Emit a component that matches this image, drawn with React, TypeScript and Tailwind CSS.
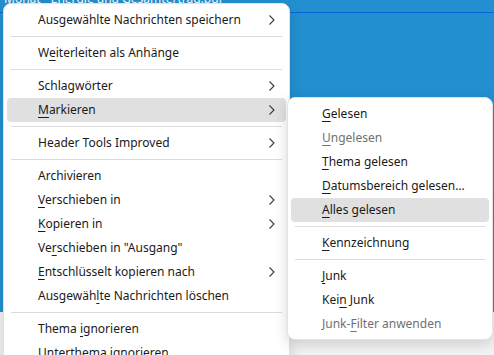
// Kontextmenü einer Nachrichtenliste (Thunderbird, Windows 11 Stil)
// Hauptmenü links, Untermenü "Markieren" rechts daneben.

type Entry =
  | { label: string; sub?: boolean; disabled?: boolean; active?: boolean }
  | "sep";

// "&" markiert die Zugriffstaste (wird unterstrichen)
const MAIN_MENU: Entry[] = [
  { label: "Ausgewählte Nachrichten speichern", sub: true },
  "sep",
  { label: "W&eiterleiten als Anhänge" },
  "sep",
  { label: "Schlagwörter", sub: true },
  { label: "&Markieren", sub: true, active: true },
  "sep",
  { label: "Header Tools Improved", sub: true },
  "sep",
  { label: "Archivieren" },
  { label: "&Verschieben in", sub: true },
  { label: "&Kopieren in", sub: true },
  { label: 'Ve&rschieben in "Ausgang"' },
  { label: "&Entschlüsselt kopieren nach", sub: true },
  { label: "Ausgewäh&lte Nachrichten löschen" },
  "sep",
  { label: "Thema &ignorieren" },
  { label: "Unterthema &ignorieren" },
];

const MARK_MENU: Entry[] = [
  { label: "&Gelesen" },
  { label: "&Ungelesen", disabled: true },
  { label: "&Thema gelesen" },
  { label: "&Datumsbereich gelesen…" },
  { label: "&Alles gelesen", active: true },
  "sep",
  { label: "&Kennzeichnung" },
  "sep",
  { label: "&Junk" },
  { label: "Kei&n Junk" },
  { label: "Junk-&Filter anwenden", disabled: true },
];

function Label({ text }: { text: string }) {
  const i = text.indexOf("&");
  if (i < 0) return <>{text}</>;
  return (
    <>
      {text.slice(0, i)}
      <span className="underline decoration-1 underline-offset-[3px]">
        {text.charAt(i + 1)}
      </span>
      {text.slice(i + 2)}
    </>
  );
}

function Chevron() {
  return (
    <svg width="8" height="12" viewBox="0 0 8 12" className="shrink-0">
      <path
        d="M1.5 1.5 L6 6 L1.5 10.5"
        fill="none"
        stroke="#3a3a3a"
        strokeWidth="1.1"
      />
    </svg>
  );
}

function MenuList({ items }: { items: Entry[] }) {
  return (
    <ul className="flex flex-col">
      {items.map((item, idx) =>
        item === "sep" ? (
          <li key={idx} className="px-1 py-1">
            <div className="h-px bg-[#dcdcdc]" />
          </li>
        ) : (
          <li
            key={idx}
            className={`flex h-6 items-center justify-between rounded pl-[31px] pr-[10px] ${
              item.active ? "bg-[#e0e0e0]" : ""
            } ${item.disabled ? "text-[#707070]" : "text-[#1a1a1a]"}`}
          >
            <span className="whitespace-nowrap leading-none">
              <Label text={item.label} />
            </span>
            {item.sub ? <Chevron /> : null}
          </li>
        ),
      )}
    </ul>
  );
}

export default function App() {
  return (
    <div className="relative flex h-[355px] w-[494px] flex-col overflow-hidden bg-[#f3f3f3] font-['Noto_Sans',sans-serif] text-[12px]">
      {/* markierte Nachrichten im Hintergrund */}
      <div className="flex h-[312px] flex-col bg-[#2290d0]">
        <div className="flex h-3 items-end overflow-hidden pl-1 text-white">
          <span className="whitespace-nowrap leading-[14px] -translate-y-[6px]">
            Monat - Energie und Gesamtertrag.pdf
          </span>
        </div>
        <div className="h-px bg-[#0a64dc]" />
      </div>

      <div className="absolute left-[3px] top-[3px] w-[287px] rounded-lg border border-[#e2e2e2] bg-white px-[3px] pb-[4px] pt-[4px] shadow-[0_4px_14px_rgba(0,0,0,0.14)]">
        <MenuList items={MAIN_MENU} />
      </div>

      <div className="absolute left-[287px] top-[97px] w-[206px] rounded-lg border border-[#e2e2e2] bg-white px-[3px] pb-[3px] pt-[4px] shadow-[0_4px_14px_rgba(0,0,0,0.16)]">
        <MenuList items={MARK_MENU} />
      </div>
    </div>
  );
}
